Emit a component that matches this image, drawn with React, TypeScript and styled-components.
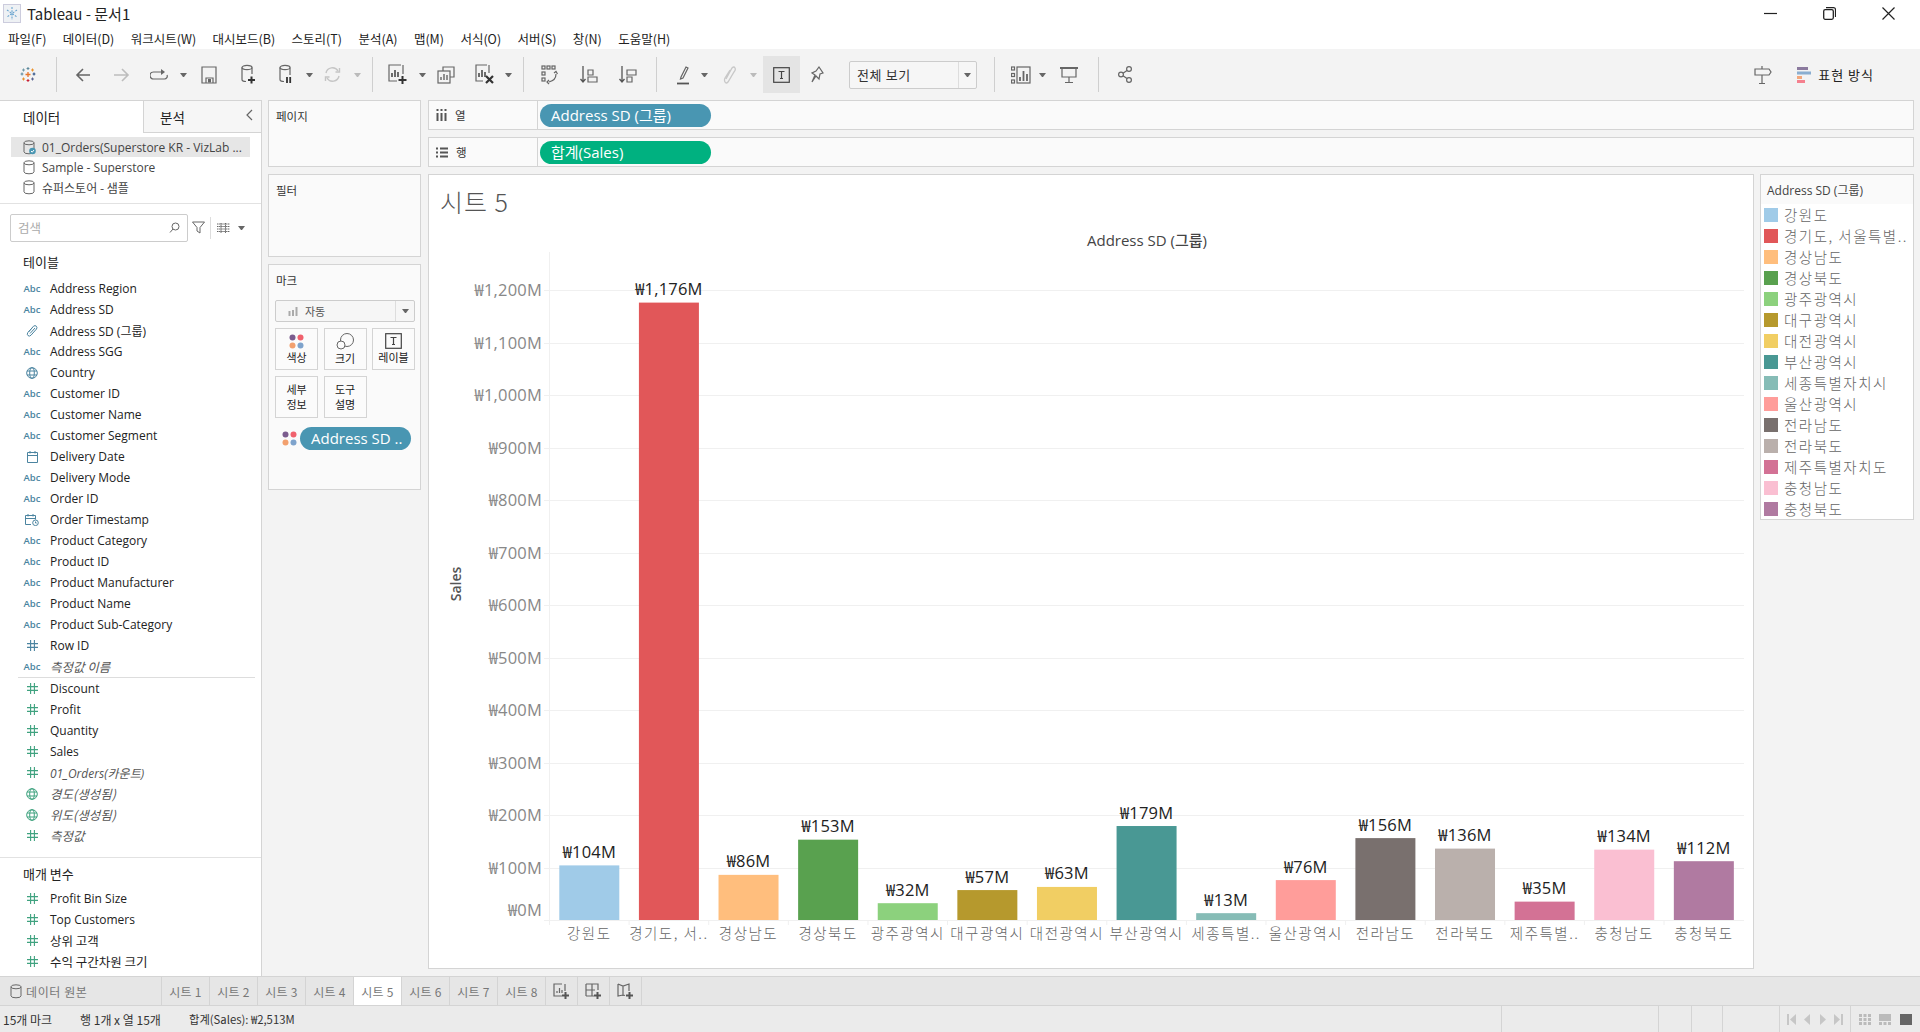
import React from "react";
import styled, { createGlobalStyle } from "styled-components";

const UI = `"Open Sans", "Noto Sans CJK KR", sans-serif`;
const KO = `"Noto Sans CJK KR", "Open Sans", sans-serif`;
const LINE = "#d4d4d4";

const Global = createGlobalStyle`
  html, body { margin: 0; padding: 0; background: #f3f3f3; overflow: hidden; }
  * { box-sizing: border-box; }
`;

const Shell = styled.div`
  width: 1920px; height: 1032px; display: flex; flex-direction: column;
  font-family: ${UI}; font-size: 12px; color: #222; background: #f3f3f3;
`;

/* ---------- window chrome ---------- */
const TitleBar = styled.div`
  height: 27px; background: #fff; display: flex; align-items: center; padding-left: 3px;
`;
const TitleText = styled.div`
  font-family: ${KO}; font-size: 15px; margin-left: 6px; color: #222; line-height: 1;
`;
const WinButtons = styled.div`
  margin-left: auto; display: flex; align-items: center; gap: 46px; padding-right: 25px;
`;
const MenuBar = styled.div`
  height: 22px; background: #fff; display: flex; align-items: center; gap: 16.4px; padding-left: 8px;
  font-family: ${KO}; font-size: 12.5px; color: #222;
`;

/* ---------- toolbar ---------- */
const Toolbar = styled.div`
  height: 51px; display: flex; align-items: center; padding-right: 46px; background: #f3f3f3;
`;
const Tool = styled.div<{ $ml: number; $w: number }>`
  margin-left: ${p => p.$ml}px; width: ${p => p.$w}px; flex: none;
  display: flex; align-items: center; justify-content: center;
`;
const ToolSep = styled.div<{ $ml: number }>`
  margin-left: ${p => p.$ml}px; width: 1px; height: 35px; background: #cfcfcf; flex: none;
`;
const ToolActive = styled.div<{ $ml: number }>`
  margin-left: ${p => p.$ml}px; width: 37px; height: 37px; background: #e4e4e4; flex: none;
  display: flex; align-items: center; justify-content: center;
`;
const ViewCombo = styled.div<{ $ml: number }>`
  margin-left: ${p => p.$ml}px; width: 128px; height: 28px; flex: none; background: #f6f6f6;
  border: 1px solid #ccc; border-radius: 2px; display: flex; align-items: center;
  font-family: ${KO}; font-size: 13px; color: #333; letter-spacing: .6px;
`;
const ViewComboText = styled.div`
  flex: 1; padding-left: 7px;
`;
const ComboArrow = styled.div`
  width: 18px; height: 100%; border-left: 1px solid #ddd; display: flex; align-items: center; justify-content: center;
`;
const Caret = styled.div<{ $c?: string }>`
  width: 7px; height: 0; flex: none; border-left: 3.5px solid transparent; border-right: 3.5px solid transparent;
  border-top: 4px solid ${p => p.$c || "#666"};
`;
const Spring = styled.div`flex: 1;`;
const ShowMeText = styled.div`
  font-family: ${KO}; font-size: 13px; color: #222; margin-left: 7px; letter-spacing: 1px; white-space: nowrap;
`;

/* ---------- workspace ---------- */
const Workspace = styled.div`
  height: 876px; display: flex; flex: none;
`;
const Sidebar = styled.div`
  width: 262px; flex: none; background: #fff; border-right: 1px solid ${LINE}; display: flex; flex-direction: column;
`;
const TabsRow = styled.div`
  height: 33px; display: flex; border-top: 1px solid ${LINE}; flex: none;
`;
const DataTab = styled.div`
  width: 143px; padding: 6px 0 0 23px; font-family: ${KO}; font-size: 13.5px; color: #222;
`;
const AnalysisTab = styled.div`
  flex: 1; background: #f6f6f6; border-left: 1px solid ${LINE}; border-bottom: 1px solid ${LINE};
  padding: 6px 8px 0 16px; display: flex; justify-content: space-between;
  font-family: ${KO}; font-size: 13.5px; color: #222;
`;
const Sources = styled.div`
  padding: 4px 11px 7px; border-bottom: 1px solid #e2e2e2; height: 71px; flex: none;
`;
const SourceRow = styled.div<{ $on?: boolean }>`
  height: 20px; width: 239px; display: flex; align-items: center; padding-left: 12px; gap: 6px;
  background: ${p => (p.$on ? "#e6e6e6" : "transparent")}; color: #444; font-size: 12px; white-space: nowrap;
`;
const SourceKo = styled.span`
  font-family: ${KO};
`;
const SearchRow = styled.div`
  display: flex; align-items: center; padding: 9px 0 0 10px; height: 38px; flex: none;
`;
const SearchBox = styled.div`
  width: 178px; height: 28px; border: 1px solid #ccc; border-radius: 2px; display: flex; align-items: center;
  justify-content: space-between; padding: 0 7px; color: #aaa; font-family: ${KO}; font-size: 12.5px;
`;
const SearchTools = styled.div`
  display: flex; align-items: center; margin-left: 4px;
`;
const SearchDivider = styled.div`
  width: 1px; height: 22px; background: #ddd; margin: 0 6px 0 5px;
`;
const SearchCaret = styled.div`
  margin-left: 8px;
`;
const Heading = styled.div<{ $top: number; $h: number }>`
  font-family: ${KO}; font-size: 13px; color: #222; padding: ${p => p.$top}px 0 0 23px; height: ${p => p.$h}px; flex: none;
`;
const FieldRow = styled.div`
  height: 21px; display: flex; align-items: center; flex: none;
`;
const FieldIcon = styled.div<{ $c: string }>`
  width: 50px; display: flex; justify-content: center; flex: none;
  padding-left: 24px; padding-right: 10px; color: ${p => p.$c};
  font: 600 9.5px "Open Sans", sans-serif;
`;
const FieldName = styled.div<{ $i?: boolean; $ko?: boolean }>`
  font-style: ${p => (p.$i ? "italic" : "normal")};
  color: ${p => (p.$i ? "#555" : "#222")};
  font-size: ${p => (p.$ko ? 12.5 : 12)}px;
  font-family: ${p => (p.$ko ? KO : UI)};
  white-space: nowrap;
`;
const FieldRule = styled.div`
  height: 1px; background: #ddd; margin: 0 6px 0 18px; flex: none;
`;
const SectionGap = styled.div`
  height: 11px; flex: none;
`;
const SectionRule = styled.div`
  height: 1px; background: #e2e2e2; flex: none;
`;

const Cards = styled.div`
  width: 153px; flex: none; margin-left: 6px; display: flex; flex-direction: column; gap: 7px;
`;
const Card = styled.div<{ $h: number }>`
  height: ${p => p.$h}px; flex: none; background: #fafafa; border: 1px solid ${LINE}; padding: 7px 6px;
`;
const CardTitle = styled.div`
  font-family: ${KO}; font-size: 11.5px; color: #333; line-height: 16px; padding-left: 1px;
`;
const MarkCombo = styled.div`
  margin-top: 12px; height: 22px; width: 140px; border: 1px solid #ccc; border-radius: 2px; background: #f6f6f6;
  display: flex; align-items: center; font-family: ${KO}; font-size: 11px; color: #555;
`;
const MarkComboLabel = styled.div`
  flex: 1; display: flex; align-items: center; gap: 7px; padding-left: 12px;
`;
const MarkComboArrow = styled.div`
  width: 19px; height: 100%; border-left: 1px solid #ddd; display: flex; align-items: center; justify-content: center;
`;
const MarkGrid = styled.div`
  display: grid; grid-template-columns: 43px 43px 43px; gap: 6px 5.5px; margin-top: 6px;
`;
const MarkBtn = styled.div`
  height: 42px; border: 1px solid ${LINE}; background: #fbfbfb; display: flex; flex-direction: column;
  align-items: center; justify-content: center; font-family: ${KO}; font-size: 11px; line-height: 15px; color: #222;
  text-align: center; gap: 1px;
`;
const MarkPillRow = styled.div`
  display: flex; align-items: center; margin-top: 9px; padding-left: 7px; gap: 3px;
`;
const Pill = styled.div<{ $bg: string; $w: number }>`
  width: ${p => p.$w}px; height: 23px; border-radius: 12px; background: ${p => p.$bg}; color: #fff;
  font-size: 15px; padding: 0 0 2px 11px; display: flex; align-items: center; white-space: nowrap; flex: none;
`;

const Main = styled.div`
  flex: 1; margin-left: 7px; margin-right: 6px; display: flex; flex-direction: column; gap: 7px; min-width: 0;
`;
const Shelf = styled.div`
  height: 30px; flex: none; background: #fafafa; border: 1px solid ${LINE}; display: flex; align-items: center;
`;
const ShelfLabel = styled.div`
  width: 109px; height: 100%; border-right: 1px solid ${LINE}; display: flex; align-items: center; gap: 8px;
  padding-left: 7px; margin-right: 2px; font-family: ${KO}; font-size: 11.5px; color: #333;
`;
const Stage = styled.div`
  height: 795px; display: flex; gap: 6px; flex: none;
`;
const ViewCard = styled.div`
  width: 1326px; flex: none; background: #fff; border: 1px solid ${LINE}; display: flex; flex-direction: column;
`;
const SheetTitle = styled.div`
  height: 55px; flex: none; font-family: ${KO}; font-size: 25px; font-weight: 300; color: #555;
  padding: 8px 0 0 11px; line-height: 36px; letter-spacing: 1px;
`;
const Legend = styled.div`
  width: 154px; height: 346px; flex: none; background: #fff; border: 1px solid ${LINE};
`;
const LegendHead = styled.div`
  height: 29px; background: #fafafa; padding: 0 6px; display: flex; align-items: center; font-size: 12px; color: #444; white-space: nowrap;
`;
const LegendBody = styled.div`
  padding-left: 3px;
`;
const LegendRow = styled.div`
  height: 21px; display: flex; align-items: center; gap: 6px;
`;
const Swatch = styled.div<{ $c: string }>`
  width: 14px; height: 14px; background: ${p => p.$c}; flex: none;
`;
const LegendName = styled.div`
  font-family: ${KO}; font-size: 14.5px; color: #666; letter-spacing: 1.5px; white-space: nowrap; font-weight: 300;
`;

/* ---------- bottom ---------- */
const TabBar = styled.div`
  height: 30px; flex: none; background: #e6e6e6; border-top: 1px solid ${LINE}; border-bottom: 1px solid ${LINE};
  display: flex; font-family: ${KO}; font-size: 12px; color: #777; letter-spacing: .3px;
`;
const SourceTab = styled.div`
  width: 162px; display: flex; align-items: center; gap: 3px; padding-left: 10px; border-right: 1px solid ${LINE}; letter-spacing: .6px;
`;
const SheetTab = styled.div<{ $on?: boolean }>`
  width: 48px; display: flex; align-items: center; justify-content: center; border-right: 1px solid ${LINE};
  background: ${p => (p.$on ? "#fff" : "transparent")}; flex: none; white-space: nowrap;
`;
const AddTab = styled.div`
  width: 32px; display: flex; align-items: center; justify-content: center; border-right: 1px solid ${LINE}; flex: none;
`;
const StatusBar = styled.div`
  height: 26px; flex: none; background: #ebebeb; display: flex; align-items: center; font-size: 11px; color: #333;
`;
const StatusLeft = styled.div`
  width: 1501px; display: flex; padding-left: 3px; font-family: ${KO}; flex: none; white-space: nowrap;
`;
const StatusText = styled.div<{ $w: number; $fs: number }>`
  width: ${p => p.$w}px; flex: none; font-size: ${p => p.$fs}px;
`;
const StatusCell = styled.div<{ $w: number }>`
  width: ${p => p.$w}px; height: 100%; border-left: 1px solid ${LINE}; flex: none; display: flex; align-items: center;
  justify-content: space-around; padding: 0 4px;
`;

/* ---------- icons ---------- */
type P = { w?: number; h?: number; children: React.ReactNode; vb?: string };
const G = ({ w = 18, h = 18, vb, children }: P) => (
  <svg width={w} height={h} viewBox={vb || `0 0 ${w} ${h}`} fill="none" stroke="#666" strokeWidth="1.2" style={{ display: "block" }}>
    {children}
  </svg>
);

const Plus = ({ x, y, s = 3.5, c = "#333" }: { x: number; y: number; s?: number; c?: string }) => (
  <path d={`M${x - s} ${y}H${x + s}M${x} ${y - s}V${y + s}`} stroke={c} strokeWidth="2" />
);

const TableauLogo = () => (
  <svg width="16" height="17" viewBox="0 0 16 17" style={{ display: "block" }}>
    <path d="M8 6v5M5.500 8.500h5" stroke="#e8762b" strokeWidth="1.300" />
    <path d="M8 1v3M6.600 2.500h2.800" stroke="#5b879b" strokeWidth="1" />
    <path d="M8 13v3M6.600 14.500h2.800" stroke="#c72035" strokeWidth="1" />
    <path d="M2 6.500v3M.6 8h2.800" stroke="#59879b" strokeWidth="1" />
    <path d="M14 6.500v3M12.600 8h2.800" stroke="#1f457e" strokeWidth="1" />
    <path d="M3.500 2.500v3M2 4h3" stroke="#7099a6" strokeWidth="1" />
    <path d="M12.500 2.500v3M11 4h3" stroke="#eb912b" strokeWidth="1" />
    <path d="M3.500 11.500v3M2 13h3" stroke="#eb912b" strokeWidth="1" />
    <path d="M12.500 11.500v3M11 13h3" stroke="#5b6591" strokeWidth="1" />
  </svg>
);
const AppIcon = () => (
  <svg width="18" height="19" viewBox="0 0 18 19" style={{ display: "block" }}>
    <rect x=".5" y=".5" width="17" height="18" fill="#eef1f4" stroke="#ccd" />
    <path d="M9 3v13M4 6l10 7M14 6L4 13" stroke="#6aa5cf" strokeWidth="1.100" strokeDasharray="2 1.200" />
  </svg>
);

const icons: Record<string, React.ReactNode> = {
  logo: <TableauLogo />,
  back: <G w={16} h={16}><path d="M15 8H2M8 2L2 8l6 6" stroke="#666" strokeWidth="1.600" /></G>,
  fwd: <G w={17} h={16}><path d="M1 8h14M9 2l6 6-6 6" stroke="#bdbdbd" strokeWidth="1.600" /></G>,
  loop: <G w={18} h={14}><path d="M11 4H3.500a2.800 2.800 0 0 0 0 7h11a2.800 2.800 0 0 0 2.500-4" /><path d="M11 1l4 3-4 3z" fill="#666" stroke="none" /></G>,
  save: <G w={16} h={18}><path d="M1 1h14v16H1zM5 17v-5h7v5" /><rect x="7" y="13" width="3" height="3.500" fill="#666" stroke="none" /></G>,
  dbadd: <G w={15} h={21}><ellipse cx="6" cy="3.500" rx="5" ry="2.200" /><path d="M1 3.500v12q0 2 4 2M11 3.500V10" /><Plus x={10.500} y={16} /></G>,
  dbpause: <G w={13} h={21}><ellipse cx="6" cy="3.500" rx="5" ry="2.200" /><path d="M1 3.500v12q0 2 4 2M11 3.500V11" /><path d="M8 13v6M11.200 13v6" stroke="#333" strokeWidth="1.800" /></G>,
  refresh: <G w={17} h={17}><path d="M2 7a6.500 6.500 0 0 1 12-2M15 10a6.500 6.500 0 0 1-12 2" stroke="#c5c5c5" strokeWidth="1.400" /><path d="M15.500 2v4h-4M1.500 15v-4h4" stroke="#c5c5c5" strokeWidth="1.400" /></G>,
  newsheet: <G w={19} h={21}><path d="M13 1H1v16h8M15 1v9" /><path d="M4 13V9M7 13V6M10 13V8" stroke="#555" strokeWidth="1.700" /><Plus x={14.500} y={16} s={4} /></G>,
  dup: <G w={18} h={18}><path d="M6 5V1h11v10h-4" /><rect x="1" y="5" width="12" height="12" fill="#f3f3f3" /><path d="M4 14v-3M7 14V8M10 14V9" stroke="#666" strokeWidth="1.400" /></G>,
  clear: <G w={20} h={21}><path d="M12 1H1v16h7M14 1v8" /><path d="M4 13V9M7 13V6M10 13V8" stroke="#555" strokeWidth="1.700" /><path d="M11 12l7 7M18 12l-7 7" stroke="#333" strokeWidth="2.200" /></G>,
  swap: <G w={17} h={20}><rect x="1" y="1" width="3" height="3" /><rect x="6" y="1" width="3" height="3" /><rect x="11" y="1" width="3" height="3" /><rect x="1" y="7" width="3" height="3" /><rect x="1" y="13" width="3" height="3" /><path d="M15 9c0 5-3 7-7 8" /><path d="M8 15l-2 2 2 2M13 8l2-1.500L16.500 9" /></G>,
  asc: <G w={18} h={20}><path d="M3 1v16M.5 14L3 17l2.500-3" stroke="#555" strokeWidth="1.300" /><path d="M8 3h5v5H8zM8 10h9v5H8z" transform="translate(0 2)" /></G>,
  desc: <G w={18} h={20}><path d="M3 1v16M.5 14L3 17l2.500-3" stroke="#555" strokeWidth="1.300" /><path d="M8 3h9v5H8zM8 10h5v5H8z" transform="translate(0 2)" /></G>,
  hl: <G w={12} h={20}><path d="M4 12l5-10 2 1-5 10-2.500 1z" /><path d="M0 18.500h12" stroke="#555" strokeWidth="1.800" /></G>,
  clip: <G w={13} h={20}><path d="M3 14L9 3q2-2 3 0t-1 4L5 17q-2 2-3 0t0-4l5-8" stroke="#c8c8c8" strokeWidth="1.300" /></G>,
  pin: <G w={13} h={18}><path d="M8 1l4 6-3 1-1 5-3-3-4 6 3-7-3-2 4-2z" /></G>,
  showme: <G w={20} h={18}><rect x=".5" y="1" width="3" height="3" /><rect x=".5" y="7.500" width="3" height="3" /><rect x=".5" y="14" width="3" height="3" /><rect x="6" y="1" width="13" height="16" /><path d="M9 15v-4M12.500 15V5M16 15V8" stroke="#666" strokeWidth="1.800" /></G>,
  present: <G w={18} h={18}><path d="M0 2h18" stroke="#666" strokeWidth="2" /><path d="M2 3v8h14V3M9 11v5M5 16.500h8" /></G>,
  share: <G w={14} h={17}><circle cx="3" cy="8.500" r="2.400" /><circle cx="11" cy="3" r="2.400" /><circle cx="11" cy="14" r="2.400" /><path d="M5 7.200l4-2.800M5 9.800l4 2.800" /></G>,
  post: <G w={18} h={18}><path d="M1 3h14l2 3-2 3H1zM8 0v3M8 9v8M5 17.500h6" /></G>,
  bars: (
    <svg width="14" height="16" style={{ display: "block" }}>
      <rect width="11" height="3" fill="#8b7a9e" />
      <rect y="4.500" width="14" height="3" fill="#8aaed0" />
      <rect y="9" width="5" height="3" fill="#f2a77c" />
      <rect y="13" width="8" height="3" fill="#f5808e" />
    </svg>
  ),
};

const Tee = () => (
  <G w={17} h={16}>
    <rect x=".7" y=".7" width="15.600" height="14.600" stroke="#444" />
    <path d="M5.500 4.500h6M8.500 4.500v7M7 11.500h3" stroke="#444" />
  </G>
);

type TI = { k: "i"; ml: number; w: number; n: string } | { k: "c"; ml: number; dim?: boolean } | { k: "s"; ml: number };
const toolbarLeft: TI[] = [
  { k: "i", ml: 20, w: 16, n: "logo" },
  { k: "s", ml: 20 },
  { k: "i", ml: 18, w: 16, n: "back" },
  { k: "i", ml: 22, w: 17, n: "fwd" },
  { k: "i", ml: 20, w: 18, n: "loop" },
  { k: "c", ml: 12 },
  { k: "i", ml: 15, w: 16, n: "save" },
  { k: "i", ml: 24, w: 15, n: "dbadd" },
  { k: "i", ml: 23, w: 13, n: "dbpause" },
  { k: "c", ml: 14 },
  { k: "i", ml: 12, w: 17, n: "refresh" },
  { k: "c", ml: 13, dim: true },
  { k: "s", ml: 12 },
  { k: "i", ml: 15, w: 19, n: "newsheet" },
  { k: "c", ml: 12 },
  { k: "i", ml: 12, w: 18, n: "dup" },
  { k: "i", ml: 20, w: 20, n: "clear" },
  { k: "c", ml: 10 },
  { k: "s", ml: 12 },
  { k: "i", ml: 17, w: 17, n: "swap" },
  { k: "i", ml: 22, w: 18, n: "asc" },
  { k: "i", ml: 21, w: 18, n: "desc" },
  { k: "s", ml: 19 },
  { k: "i", ml: 20, w: 12, n: "hl" },
  { k: "c", ml: 12 },
  { k: "i", ml: 16, w: 13, n: "clip" },
  { k: "c", ml: 14, dim: true },
];
const toolbarMid: TI[] = [
  { k: "s", ml: 17 },
  { k: "i", ml: 16, w: 20, n: "showme" },
  { k: "c", ml: 8 },
  { k: "i", ml: 15, w: 18, n: "present" },
  { k: "s", ml: 20 },
  { k: "i", ml: 19, w: 14, n: "share" },
];
const renderTools = (items: TI[]) =>
  items.map((t, i) =>
    t.k === "s" ? (
      <ToolSep key={i} $ml={t.ml} />
    ) : t.k === "c" ? (
      <Tool key={i} $ml={t.ml} $w={6}><Caret $c={t.dim ? "#bbb" : "#666"} /></Tool>
    ) : (
      <Tool key={i} $ml={t.ml} $w={t.w}>{icons[t.n]}</Tool>
    )
  );

/* field icons */
const BLUE = "#4b84a0";
const GREEN = "#3fa27f";
const Globe = ({ c }: { c: string }) => (
  <svg width="12" height="12" viewBox="0 0 12 12" fill="none" stroke={c} strokeWidth="1" style={{ display: "block", flex: "none" }}>
    <circle cx="6" cy="6" r="5.300" /><ellipse cx="6" cy="6" rx="2.300" ry="5.300" /><path d="M1 4h10M1 8h10" />
  </svg>
);
const Hash = ({ c }: { c: string }) => (
  <svg width="11" height="11" viewBox="0 0 11 11" fill="none" stroke={c} strokeWidth="1.100" style={{ display: "block", flex: "none" }}>
    <path d="M3.600 0v11M7.400 0v11M0 3.600h11M0 7.400h11" />
  </svg>
);
const Cal = ({ c, clock }: { c: string; clock?: boolean }) => (
  <svg width={clock ? 14 : 11} height="12" viewBox={clock ? "0 0 14 12" : "0 0 11 12"} fill="none" stroke={c} strokeWidth="1" style={{ display: "block", flex: "none" }}>
    <path d={clock ? "M6 10.500H.5v-9h10v4" : "M.5 1.500h10v10H.5z"} /><path d="M.5 4.500h10M3 0v2.500M8 0v2.500" />
    {clock && <><circle cx="10.500" cy="8.800" r="2.800" fill="#fff" /><path d="M10.500 7.500v1.500h1.200" /></>}
  </svg>
);
const Clip = ({ c }: { c: string }) => (
  <svg width="12" height="12" viewBox="0 0 12 12" fill="none" stroke={c} strokeWidth="1" style={{ display: "block", flex: "none" }}>
    <path d="M2.500 7L7.500 1.200q1.600-1.200 2.800 0t.2 2.800L5 10.200q-1.600 1.600-3 .4t-.2-3L6.500 2.500M4 8.500l5-5.500" />
  </svg>
);
const fieldIcon = (t: string, c: string) =>
  t === "abc" ? "Abc" : t === "clip" ? <Clip c={c} /> : t === "globe" ? <Globe c={c} /> : t === "cal" ? <Cal c={c} /> : t === "calt" ? <Cal c={c} clock /> : <Hash c={c} />;

type F = [string, string, boolean?, boolean?];
const dims: F[] = [
  ["abc", "Address Region"], ["abc", "Address SD"], ["clip", "Address SD (그룹)"], ["abc", "Address SGG"],
  ["globe", "Country"], ["abc", "Customer ID"], ["abc", "Customer Name"], ["abc", "Customer Segment"],
  ["cal", "Delivery Date"], ["abc", "Delivery Mode"], ["abc", "Order ID"], ["calt", "Order Timestamp"],
  ["abc", "Product Category"], ["abc", "Product ID"], ["abc", "Product Manufacturer"], ["abc", "Product Name"],
  ["abc", "Product Sub-Category"], ["hash", "Row ID"], ["abc", "측정값 이름", true, true],
];
const meas: F[] = [
  ["hash", "Discount"], ["hash", "Profit"], ["hash", "Quantity"], ["hash", "Sales"],
  ["hash", "01_Orders(카운트)", true], ["globe", "경도(생성됨)", true, true], ["globe", "위도(생성됨)", true, true], ["hash", "측정값", true, true],
];
const params: F[] = [
  ["hash", "Profit Bin Size"], ["hash", "Top Customers"], ["hash", "상위 고객", false, true], ["hash", "수익 구간차원 크기", false, true],
];
const Fields = ({ items, c }: { items: F[]; c: string }) => (
  <>
    {items.map(([t, n, i, ko]) => (
      <FieldRow key={n}>
        <FieldIcon $c={c}>{fieldIcon(t, c)}</FieldIcon>
        <FieldName $i={i} $ko={ko}>{n}</FieldName>
      </FieldRow>
    ))}
  </>
);

const Db = ({ check }: { check?: boolean }) => (
  <svg width="13" height="15" viewBox="0 0 13 15" fill="none" stroke="#666" strokeWidth="1" style={{ display: "block", flex: "none" }}>
    <ellipse cx="6" cy="2.800" rx="5" ry="2" /><path d="M1 2.800v9q0 2 5 2t5-2v-9" />
    {check && <><circle cx="9.500" cy="11" r="3.300" fill="#4996b2" stroke="none" /><path d="M8 11l1.200 1.200L11 10" stroke="#fff" /></>}
  </svg>
);
const Dots = () => (
  <svg width="15" height="15" style={{ display: "block", flex: "none" }}>
    <circle cx="3.500" cy="3.500" r="3" fill="#7b5c8e" /><circle cx="11.500" cy="3.500" r="3" fill="#f0616d" />
    <circle cx="3.500" cy="11.500" r="3" fill="#f2a06e" /><circle cx="11.500" cy="11.500" r="3" fill="#7ea3cc" />
  </svg>
);

/* chart */
const cats = [
  ["강원도", "강원도", 104, "#a0cbe8"], ["경기도, 서..", "경기도, 서울특별..", 1176, "#e15759"], ["경상남도", "경상남도", 86, "#ffbe7d"],
  ["경상북도", "경상북도", 153, "#59a14f"], ["광주광역시", "광주광역시", 32, "#8cd17d"], ["대구광역시", "대구광역시", 57, "#b6992d"],
  ["대전광역시", "대전광역시", 63, "#f1ce63"], ["부산광역시", "부산광역시", 179, "#499894"], ["세종특별..", "세종특별자치시", 13, "#86bcb6"],
  ["울산광역시", "울산광역시", 76, "#ff9d9a"], ["전라남도", "전라남도", 156, "#79706e"], ["전라북도", "전라북도", 136, "#bab0ac"],
  ["제주특별..", "제주특별자치도", 35, "#d37295"], ["충청남도", "충청남도", 134, "#fabfd2"], ["충청북도", "충청북도", 112, "#b07aa1"],
] as [string, string, number, string][];
const Y0 = 920;
const K = 0.525;
const won = (v: number) => "₩" + v.toLocaleString("en-US") + "M";

const Chart = () => (
  <svg width="1324" height="738" viewBox="429 230 1324 738" style={{ display: "block" }}>
    <text x="1147" y="246" textAnchor="middle" fontFamily={UI} fontSize="15" fontWeight="500" fill="#444">Address SD (그룹)</text>
    <text transform="translate(461 584) rotate(-90)" textAnchor="middle" fontFamily={UI} fontSize="14" fontWeight="600" fill="#555">Sales</text>
    <line x1="549.500" x2="549.500" y1="252" y2="925" stroke="#f0f0f0" />
    {Array.from({ length: 13 }, (_, i) => i * 100).map(v => {
      const y = Math.round(Y0 - v * K) + 0.5;
      return (
        <g key={v}>
          <line x1="544" x2="1744" y1={y} y2={y} stroke="#f0f0f0" />
          <text x="542" y={v === 0 ? 915.500 : y + 5.500} textAnchor="end" fontFamily={UI} fontSize="16.500" letterSpacing=".2" fill="#888">{won(v)}</text>
        </g>
      );
    })}
    {cats.map(([short, , v, c], i) => {
      const x = 559.300 + i * 79.610;
      const top = Y0 - v * K;
      return (
        <g key={short}>
          <rect x={x} y={top} width="60" height={v * K} fill={c} />
          <line x1={x - 9.800} x2={x - 9.800} y1="920" y2="925" stroke="#f0f0f0" />
          <text x={x + 30} y={top - 7.500} textAnchor="middle" fontFamily={UI} fontSize="16.500" letterSpacing=".2" fill="#222">{won(v)}</text>
          <text x={x + 30} y="939" textAnchor="middle" fontFamily={KO} fontSize="14.500" fontWeight="300" letterSpacing="1.500" fill="#666">{short}</text>
        </g>
      );
    })}
  </svg>
);

const AddIcon = ({ kind }: { kind: number }) => (
  <G w={17} h={17}>
    {kind === 0 && <><path d="M9 1H1v12h8M12 1v7" /><path d="M4 10V8M6.500 10V5M9 10V7" /></>}
    {kind === 1 && <path d="M1 1h12v6M1 13V1M1 7h9M7 1v12M1 13h8" />}
    {kind === 2 && <path d="M1 1l5 2 6-2v7M6 3v10M1 1v12l5-1 2 .5" />}
    <Plus x={12.500} y={12.500} s={3.500} c="#555" />
  </G>
);

const Nav = ({ d }: { d: string }) => (
  <svg width="10" height="11" viewBox="0 0 10 11" style={{ display: "block" }}><path d={d} fill="#c6c6c6" /></svg>
);

export default function App() {
  return (
    <Shell>
      <Global />
      <TitleBar>
        <AppIcon />
        <TitleText>Tableau - 문서1</TitleText>
        <WinButtons>
          <G w={13} h={13}><path d="M0 6.500h13" stroke="#222" /></G>
          <G w={13} h={13}><rect x=".7" y="2.700" width="9.600" height="9.600" rx="1.500" stroke="#222" strokeWidth="1.300" /><path d="M3 .700h7.500a2 2 0 0 1 2 2V10" stroke="#222" /></G>
          <G w={13} h={13}><path d="M.5.500l12 12M12.500.500l-12 12" stroke="#222" /></G>
        </WinButtons>
      </TitleBar>
      <MenuBar>
        {["파일(F)", "데이터(D)", "워크시트(W)", "대시보드(B)", "스토리(T)", "분석(A)", "맵(M)", "서식(O)", "서버(S)", "창(N)", "도움말(H)"].map(m => <div key={m}>{m}</div>)}
      </MenuBar>
      <Toolbar>
        {renderTools(toolbarLeft)}
        <ToolActive $ml={7}><Tee /></ToolActive>
        <Tool $ml={11} $w={13}>{icons.pin}</Tool>
        <ViewCombo $ml={25}>
          <ViewComboText>전체 보기</ViewComboText>
          <ComboArrow><Caret /></ComboArrow>
        </ViewCombo>
        {renderTools(toolbarMid)}
        <Spring />
        <Tool $ml={0} $w={18}>{icons.post}</Tool>
        <Tool $ml={25} $w={14}>{icons.bars}</Tool>
        <ShowMeText>표현 방식</ShowMeText>
      </Toolbar>
      <Workspace>
        <Sidebar>
          <TabsRow>
            <DataTab>데이터</DataTab>
            <AnalysisTab>
              분석
              <svg width="7" height="12" style={{ marginTop: 2 }}><path d="M6 1L1 6l5 5" fill="none" stroke="#666" strokeWidth="1.200" /></svg>
            </AnalysisTab>
          </TabsRow>
          <Sources>
            <SourceRow $on><Db check />01_Orders(Superstore KR - VizLab ...</SourceRow>
            <SourceRow><Db />Sample - Superstore</SourceRow>
            <SourceRow><Db /><SourceKo>슈퍼스토어 - 샘플</SourceKo></SourceRow>
          </Sources>
          <SearchRow>
            <SearchBox>
              검색
              <svg width="11" height="11" fill="none" stroke="#666"><circle cx="6.500" cy="4.500" r="3.500" /><path d="M4 7L1 10.500" /></svg>
            </SearchBox>
            <SearchTools>
              <svg width="13" height="13" fill="none" stroke="#666"><path d="M.5 1h12L8 6.500V12L5 10V6.500z" /></svg>
              <SearchDivider />
              <svg width="13" height="10" fill="none" stroke="#666"><path d="M0 1h13M0 3.500h13M0 6h13M0 8.500h13M4 0v10M8.500 0v10" strokeDasharray="1.500 .6" /></svg>
              <SearchCaret><Caret /></SearchCaret>
            </SearchTools>
          </SearchRow>
          <Heading $top={10} $h={36}>테이블</Heading>
          <Fields items={dims} c={BLUE} />
          <FieldRule />
          <Fields items={meas} c={GREEN} />
          <SectionGap />
          <SectionRule />
          <Heading $top={6} $h={30}>매개 변수</Heading>
          <Fields items={params} c={GREEN} />
        </Sidebar>
        <Cards>
          <Card $h={67}><CardTitle>페이지</CardTitle></Card>
          <Card $h={83}><CardTitle>필터</CardTitle></Card>
          <Card $h={226}>
            <CardTitle>마크</CardTitle>
            <MarkCombo>
              <MarkComboLabel>
                <svg width="10" height="10"><path d="M1.500 10V5M5 10V4M8.500 10V1" stroke="#aaa" strokeWidth="2" /></svg>
                자동
              </MarkComboLabel>
              <MarkComboArrow><Caret /></MarkComboArrow>
            </MarkCombo>
            <MarkGrid>
              <MarkBtn><Dots />색상</MarkBtn>
              <MarkBtn>
                <svg width="19" height="17" fill="none" stroke="#666"><circle cx="11" cy="7" r="6.500" fill="#fbfbfb" /><circle cx="5" cy="12" r="4" fill="#fbfbfb" /></svg>
                크기
              </MarkBtn>
              <MarkBtn><Tee />레이블</MarkBtn>
              <MarkBtn>세부<br />정보</MarkBtn>
              <MarkBtn>도구<br />설명</MarkBtn>
            </MarkGrid>
            <MarkPillRow>
              <Dots />
              <Pill $bg="#4996b2" $w={111}>Address SD ..</Pill>
            </MarkPillRow>
          </Card>
        </Cards>
        <Main>
          <Shelf>
            <ShelfLabel>
              <svg width="11" height="12"><path d="M1.500 0v2M5.500 0v2M9.500 0v2" stroke="#555" strokeWidth="2" /><path d="M1.500 4v8M5.500 4v8M9.500 4v8" stroke="#555" strokeWidth="2" /></svg>
              열
            </ShelfLabel>
            <Pill $bg="#4996b2" $w={171}>Address SD (그룹)</Pill>
          </Shelf>
          <Shelf>
            <ShelfLabel>
              <svg width="12" height="11"><path d="M0 1.500h2M0 5.500h2M0 9.500h2M4 1.500h8M4 5.500h8M4 9.500h8" stroke="#555" strokeWidth="2" /></svg>
              행
            </ShelfLabel>
            <Pill $bg="#00b180" $w={171}>합계(Sales)</Pill>
          </Shelf>
          <Stage>
            <ViewCard>
              <SheetTitle>시트 5</SheetTitle>
              <Chart />
            </ViewCard>
            <Legend>
              <LegendHead>Address SD (그룹)</LegendHead>
              <LegendBody>
                {cats.map(([, name, , c]) => (
                  <LegendRow key={name}><Swatch $c={c} /><LegendName>{name}</LegendName></LegendRow>
                ))}
              </LegendBody>
            </Legend>
          </Stage>
        </Main>
      </Workspace>
      <TabBar>
        <SourceTab><Db />데이터 원본</SourceTab>
        {[1, 2, 3, 4, 5, 6, 7, 8].map(n => <SheetTab key={n} $on={n === 5}>시트 {n}</SheetTab>)}
        {[0, 1, 2].map(k => <AddTab key={k}><AddIcon kind={k} /></AddTab>)}
      </TabBar>
      <StatusBar>
        <StatusLeft>
          <StatusText $w={77} $fs={12}>15개 마크</StatusText>
          <StatusText $w={109} $fs={12}>행 1개 x 열 15개</StatusText>
          <StatusText $w={200} $fs={11.300}>합계(Sales): ₩2,513M</StatusText>
        </StatusLeft>
        <StatusCell $w={157} />
        <StatusCell $w={33} />
        <StatusCell $w={31} />
        <StatusCell $w={57} />
        <StatusCell $w={71}>
          <Nav d="M0 0h2v11H0zM9 0v11L3 5.500z" />
          <Nav d="M8 0v11L2 5.500z" />
          <Nav d="M2 0v11l6-5.500z" />
          <Nav d="M10 0H8v11h2zM1 0v11l6-5.500z" />
        </StatusCell>
        <StatusCell $w={70}>
          <svg width="12" height="11"><path d="M0 1.500h12M0 5.500h12M0 9.500h12" stroke="#bbb" strokeWidth="3" strokeDasharray="3 1.500" /></svg>
          <svg width="12" height="11"><rect width="12" height="7" fill="#bbb" /><path d="M0 9.500h12" stroke="#bbb" strokeWidth="3" strokeDasharray="3 1.500" /></svg>
          <svg width="12" height="11"><rect width="12" height="11" fill="#666" /></svg>
        </StatusCell>
      </StatusBar>
    </Shell>
  );
}
